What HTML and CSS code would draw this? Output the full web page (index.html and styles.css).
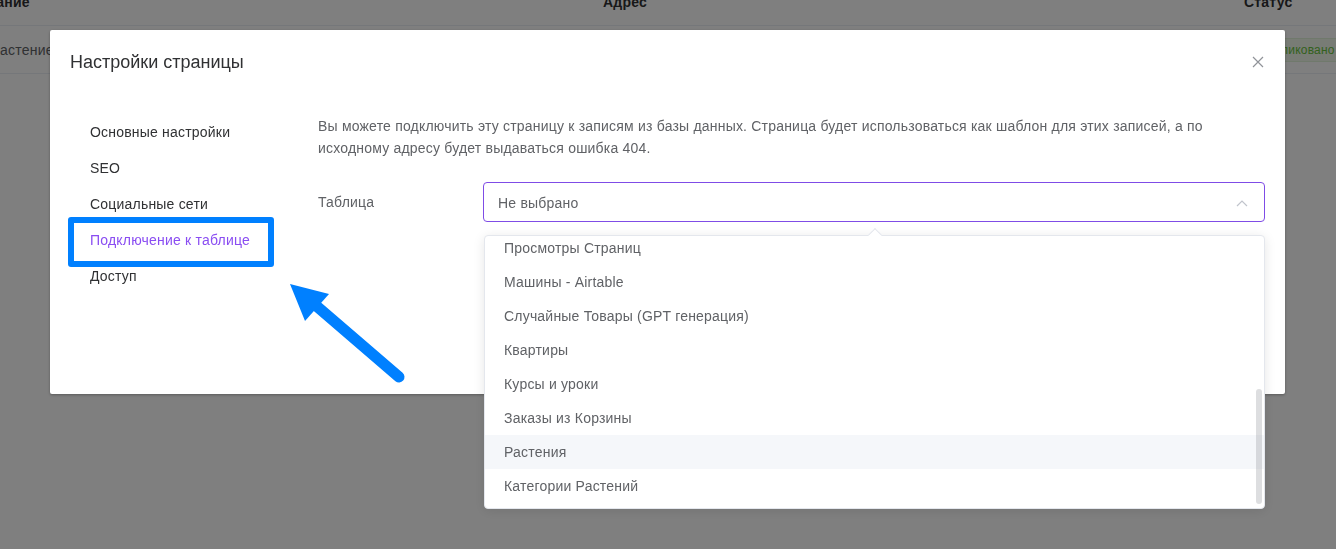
FILE: index.html
```html
<!DOCTYPE html>
<html lang="ru">
<head>
    <meta charset="UTF-8">
    <meta name="viewport" content="width=device-width, initial-scale=1.0">
    <title>Настройки страницы</title>
    <link rel="stylesheet" href="styles.css">
</head>
<body>
    <!-- таблица страниц (под модалкой) -->
    <div class="pages-table">
        <div class="row head">
            <div class="cell first">Название</div>
            <div class="cell">Адрес</div>
            <div class="cell">Статус</div>
        </div>
        <div class="row">
            <div class="cell first item-name">Растение</div>
            <div class="cell">/plants</div>
            <div class="cell"><span class="tag">Опубликовано</span></div>
        </div>
    </div>

    <div class="overlay"></div>

    <!-- модалка -->
    <div class="modal">
        <div class="modal-header">
            <span class="modal-title">Настройки страницы</span>
            <button class="modal-close" aria-label="Закрыть">
                <svg width="12" height="12" viewBox="0 0 12 12"><path d="M1 1L11 11M11 1L1 11" stroke="#909399" stroke-width="1.2" fill="none"/></svg>
            </button>
        </div>
        <div class="modal-body">
            <ul class="side-menu">
                <li>Основные настройки</li>
                <li>SEO</li>
                <li>Социальные сети</li>
                <li class="active">Подключение к таблице</li>
                <li>Доступ</li>
            </ul>
            <div class="content">
                <p class="hint">Вы можете подключить эту страницу к записям из базы данных. Страница будет использоваться как шаблон для этих записей, а по исходному адресу будет выдаваться ошибка 404.</p>
                <div class="form-row">
                    <label class="form-label">Таблица</label>
                    <div class="select">
                        <span>Не выбрано</span>
                        <svg class="chevron" width="12" height="8" viewBox="0 0 12 8"><path d="M1 7L6 2L11 7" stroke="#c0c4cc" stroke-width="1.2" fill="none"/></svg>
                    </div>
                </div>
            </div>
        </div>
    </div>

    <!-- выпадающий список -->
    <div class="dropdown">
        <div class="dropdown-arrow"></div>
        <div class="dropdown-scroll">
            <ul class="dropdown-list">
                <li>Просмотры Страниц</li>
                <li>Машины - Airtable</li>
                <li>Случайные Товары (GPT генерация)</li>
                <li>Квартиры</li>
                <li>Курсы и уроки</li>
                <li>Заказы из Корзины</li>
                <li class="hover">Растения</li>
                <li>Категории Растений</li>
            </ul>
            <div class="scroll-thumb"></div>
        </div>
    </div>

    <!-- пометка на скриншоте -->
    <div class="mark-box"></div>
    <svg class="mark-arrow" width="140" height="120" viewBox="0 0 140 120">
        <path d="M129 107L43 33" stroke="#0080ff" stroke-width="11" stroke-linecap="round" fill="none"/>
        <polygon points="20,14 59,24 35,51" fill="#0080ff"/>
    </svg>
</body>
</html>
```

FILE: styles.css
```css
* {
    box-sizing: border-box;
}

body {
    margin: 0;
    width: 1336px;
    height: 549px;
    overflow: hidden;
    background: #fff;
    font-family: "Liberation Sans", Arial, sans-serif;
    font-size: 14px;
    letter-spacing: 0.2px;
    color: #303133;
}

/* таблица на фоне */
.pages-table {
    margin-top: -21px;
    margin-left: -38px;
}

.row {
    display: grid;
    grid-template-columns: 641px 641px 1fr;
    height: 48px;
    align-items: center;
    border-bottom: 1px solid #ebeef5;
    color: #606266;
}

.row.head {
    height: 47px;
    font-weight: bold;
    color: #303133;
}

.item-name {
    padding-left: 29px;
}

.tag {
    display: inline-block;
    height: 24px;
    line-height: 22px;
    padding: 0 9px;
    font-size: 12px;
    color: #67c23a;
    background: #f0f9eb;
    border: 1px solid #e1f3d8;
    border-radius: 4px;
    margin-left: -2px;
}

.overlay {
    position: fixed;
    inset: 0;
    background: rgba(0, 0, 0, 0.5);
}

/* модалка */
.modal {
    position: fixed;
    left: 50px;
    top: 30px;
    width: 1235px;
    height: 364px;
    background: #fff;
    border-radius: 2px;
    box-shadow: 0 1px 3px rgba(0, 0, 0, 0.3);
}

.modal-header {
    display: flex;
    justify-content: space-between;
    align-items: center;
    padding: 20px;
    height: 64px;
}

.modal-title {
    font-size: 18px;
    line-height: 24px;
    letter-spacing: 0;
    color: #303133;
}

.modal-close {
    border: none;
    background: none;
    padding: 0;
    margin-right: 1px;
    cursor: pointer;
    display: flex;
}

.modal-body {
    display: flex;
    padding: 20px;
}

.side-menu {
    list-style: none;
    margin: 0;
    padding: 0;
    width: 248px;
    flex-shrink: 0;
}

.side-menu li {
    height: 36px;
    line-height: 36px;
    padding-left: 20px;
    color: #303133;
    cursor: pointer;
}

.side-menu li.active {
    color: #8a4df2;
}

.content {
    flex: 1;
}

.hint {
    margin: 1px 0 0;
    line-height: 22px;
    color: #606266;
}

.form-row {
    display: flex;
    align-items: center;
    margin-top: 23px;
}

.form-label {
    width: 165px;
    color: #606266;
}

.select {
    flex: 1;
    height: 40px;
    display: flex;
    align-items: center;
    justify-content: space-between;
    padding: 1px 16px 0 14px;
    border: 1px solid #7f4ce6;
    border-radius: 4px;
    color: #606266;
}

/* выпадающий список */
.dropdown {
    position: fixed;
    left: 484px;
    top: 235px;
    width: 781px;
    height: 274px;
    background: #fff;
    border: 1px solid #e4e7ed;
    border-radius: 4px;
    box-shadow: 0 2px 12px rgba(0, 0, 0, 0.1);
}

.dropdown-arrow {
    position: absolute;
    top: -6px;
    left: 385px;
    width: 10px;
    height: 10px;
    background: #fff;
    border-left: 1px solid #e4e7ed;
    border-top: 1px solid #e4e7ed;
    transform: rotate(45deg);
}

.dropdown-scroll {
    position: relative;
    height: 100%;
    overflow: hidden;
}

.dropdown-list {
    list-style: none;
    margin: -5px 0 0;
    padding: 0;
}

.dropdown-list li {
    height: 34px;
    line-height: 34px;
    padding: 0 19px;
    color: #606266;
}

.dropdown-list li.hover {
    background: #f5f7fa;
}

.scroll-thumb {
    position: absolute;
    right: 2px;
    top: 153px;
    width: 6px;
    height: 115px;
    border-radius: 3px;
    background: rgba(144, 147, 153, 0.3);
}

/* синяя рамка и стрелка */
.mark-box {
    position: fixed;
    left: 68px;
    top: 217px;
    width: 206px;
    height: 50px;
    border: 6px solid #0080ff;
    border-radius: 3px;
}

.mark-arrow {
    position: fixed;
    left: 270px;
    top: 270px;
}
```
